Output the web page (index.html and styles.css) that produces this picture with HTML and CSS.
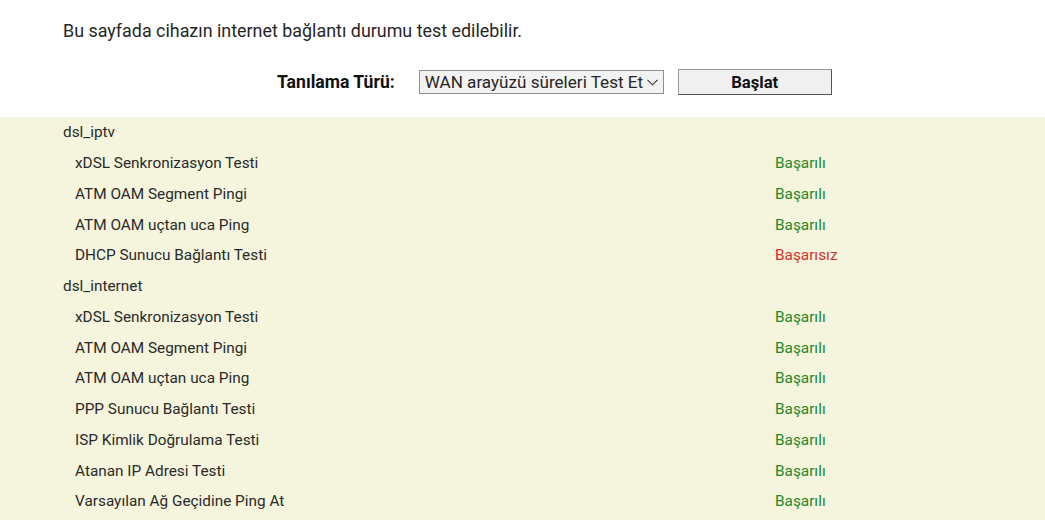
FILE: index.html
```html
<!DOCTYPE html>
<html lang="tr">
<head>
<meta charset="utf-8">
<link rel="stylesheet" href="styles.css">
</head>
<body>
<div class="top">
  <p class="intro">Bu sayfada cihazın internet bağlantı durumu test edilebilir.</p>
  <div class="controls">
    <label class="lbl" for="type">Tanılama Türü:</label>
    <span class="selwrap">
      <select id="type" class="sel">
        <option>WAN arayüzü süreleri Test Et</option>
      </select>
      <svg class="chev" width="11" height="7" viewBox="0 0 11 7"><polyline points="0.5,0.8 5.5,5.8 10.5,0.8" fill="none" stroke="#333" stroke-width="1.1"/></svg>
    </span>
    <button class="btn" type="button">Başlat</button>
  </div>
</div>
<div class="panel">
  <div class="row group"><span>dsl_iptv</span></div>
  <div class="row item"><span>xDSL Senkronizasyon Testi</span><span class="ok">Başarılı</span></div>
  <div class="row item"><span>ATM OAM Segment Pingi</span><span class="ok">Başarılı</span></div>
  <div class="row item"><span>ATM OAM uçtan uca Ping</span><span class="ok">Başarılı</span></div>
  <div class="row item"><span>DHCP Sunucu Bağlantı Testi</span><span class="fail">Başarısız</span></div>
  <div class="row group"><span>dsl_internet</span></div>
  <div class="row item"><span>xDSL Senkronizasyon Testi</span><span class="ok">Başarılı</span></div>
  <div class="row item"><span>ATM OAM Segment Pingi</span><span class="ok">Başarılı</span></div>
  <div class="row item"><span>ATM OAM uçtan uca Ping</span><span class="ok">Başarılı</span></div>
  <div class="row item"><span>PPP Sunucu Bağlantı Testi</span><span class="ok">Başarılı</span></div>
  <div class="row item"><span>ISP Kimlik Doğrulama Testi</span><span class="ok">Başarılı</span></div>
  <div class="row item"><span>Atanan IP Adresi Testi</span><span class="ok">Başarılı</span></div>
  <div class="row item"><span>Varsayılan Ağ Geçidine Ping At</span><span class="ok">Başarılı</span></div>
</div>
</body>
</html>
```
FILE: styles.css
```css
html, body {
  margin: 0;
  padding: 0;
  background: #ffffff;
  font-family: Roboto, "Liberation Sans", Arial, sans-serif;
  color: #262626;
}
.top {
  height: 117px;
  box-sizing: border-box;
  padding-top: 21px;
}
.intro {
  margin: 0;
  padding-left: 63px;
  font-size: 17.9px;
  line-height: 20px;
}
.controls {
  display: flex;
  align-items: center;
  margin-top: 28px;
  padding-left: 277px;
  height: 26px;
}
.lbl {
  font-weight: bold;
  font-size: 17.6px;
  color: #111111;
  margin-right: 24px;
  white-space: nowrap;
}
.selwrap {
  position: relative;
  display: inline-flex;
  margin-right: 14px;
}
.sel {
  -webkit-appearance: none;
  appearance: none;
  font-family: Roboto, "Liberation Sans", Arial, sans-serif;
  font-size: 17.1px;
  color: #262626;
  width: 245px;
  height: 24px;
  border: 1px solid #8f8f8f;
  border-radius: 0;
  background-color: #f2f2f2;
  padding: 0 0 0 5px;
  margin: 0;
  line-height: 22px;
}
.chev {
  position: absolute;
  left: 228px;
  top: 9px;
  pointer-events: none;
}
.btn {
  font-family: Roboto, "Liberation Sans", Arial, sans-serif;
  font-size: 16.7px;
  font-weight: bold;
  color: #111111;
  width: 154px;
  height: 26px;
  background: #f0f0f0;
  border: 1px solid;
  border-color: #9a9a9a #555555 #555555 #9a9a9a;
  border-radius: 0;
  padding: 0;
}
.panel {
  background: #f4f5dc;
  min-height: 403px;
}
.row {
  display: grid;
  grid-template-columns: 775px 1fr;
  align-items: center;
  height: 30.75px;
  font-size: 15.35px;
  color: #2a2a2a;
}
.group span {
  padding-left: 63px;
}
.item span:first-child {
  padding-left: 75px;
}
.ok {
  color: #26862a;
}
.fail {
  color: #d42f2f;
}
```
